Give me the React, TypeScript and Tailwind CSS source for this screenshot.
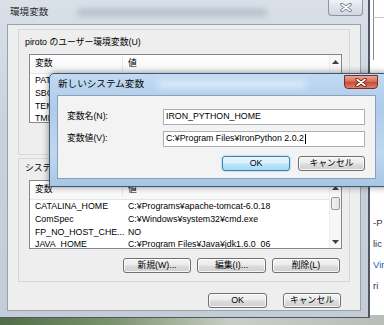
import React from "react";

// values of the user list sit under the dialog, so only names are drawn
const userVars = [
  ["PATH", ""],
  ["SBCL_HOME", ""],
  ["TEMP", ""],
  ["TMP", ""]
];

const systemVars = [
  ["CATALINA_HOME", "C:¥Programs¥apache-tomcat-6.0.18"],
  ["ComSpec", "C:¥Windows¥system32¥cmd.exe"],
  ["FP_NO_HOST_CHE...", "NO"],
  ["JAVA_HOME", "C:¥Program Files¥Java¥jdk1.6.0_06"]
];

const btn =
  "flex items-center justify-center rounded-[3px] border border-[#707070] bg-[linear-gradient(#f4f4f4_0%,#ebebeb_48%,#dddddd_52%,#cfcfcf_100%)] shadow-[inset_0_0_0_1px_rgba(255,255,255,0.8)] text-black";

function CloseGlyph({ light }: { light?: boolean }) {
  return (
    <svg width="12" height="9" viewBox="0 0 12 9">
      <path d="M2 1.5 L10 7.5 M10 1.5 L2 7.5" stroke={light ? "#6b7480" : "#5a1a10"} strokeWidth="3.4" strokeLinecap="round" />
      <path d="M2 1.5 L10 7.5 M10 1.5 L2 7.5" stroke="#ffffff" strokeWidth="1.6" strokeLinecap="round" />
    </svg>
  );
}

function Arrow({ down }: { down?: boolean }) {
  return (
    <svg width="7" height="4" viewBox="0 0 7 4">
      <path d={down ? "M0 0 L7 0 L3.5 4 Z" : "M0 4 L7 4 L3.5 0 Z"} fill="#404040" />
    </svg>
  );
}

function ListBox({ rows, thumb }: { rows: string[][]; thumb?: boolean }) {
  return (
    <div className="relative ml-[10px] h-[69px] w-[313px] overflow-hidden border border-[#828790] bg-white">
      <div className="flex h-[19px] items-center border-b border-[#e5e5e5] bg-[linear-gradient(#ffffff,#f6f7f8)]">
        <div className="w-[93px] border-r border-[#e3e6ea] pl-[5px]">変数</div>
        <div className="pl-[5px]">値</div>
      </div>
      {rows.map(([name, value]) => (
        <div className="flex h-[12.7px] items-center leading-[12px]" key={name}>
          <div className="w-[93px] shrink-0 whitespace-nowrap pl-[5px]">{name}</div>
          <div className="whitespace-nowrap pl-[5px]">{value}</div>
        </div>
      ))}
      <div className="absolute right-0 top-0 flex h-full w-[12px] flex-col items-center border-l border-[#ededed] bg-[#f7f7f7]">
        <div className="flex h-[13px] w-full items-center justify-center">
          <Arrow />
        </div>
        <div className="w-full flex-1 px-[1px] pt-[3px]">
          {thumb && (
            <div className="h-[13px] w-full rounded-[2px] border border-[#9a9a9a] bg-[linear-gradient(90deg,#f3f3f3,#e2e2e2)]" />
          )}
        </div>
        <div className="flex h-[13px] w-full items-center justify-center">
          <Arrow down />
        </div>
      </div>
    </div>
  );
}

export default function App() {
  return (
    <div className="relative h-[325px] w-[384px] overflow-hidden bg-white font-['Liberation_Sans','Noto_Sans_CJK_JP',sans-serif] text-[8.8px] text-black">
      {/* desktop bits behind the windows */}
      <div className="absolute bottom-0 left-0 h-[10px] w-full bg-[linear-gradient(90deg,#4f6d48,#7d9470_30%,#c9cec6_60%,#b9bdb8)]" />
      <div className="absolute left-[373px] top-0 h-[60px] w-px bg-[#8a8a8a]" />
      <div className="absolute left-[373px] top-[17px] h-px w-[11px] bg-[#c8c8c8]" />
      <div className="absolute left-[373px] top-[217px] flex flex-col gap-[9px] text-[9.5px] leading-[12px] text-[#333]">
        <span>-P</span>
        <span>lic</span>
        <span className="text-[#1d5fb0]">Vir</span>
        <span>ri</span>
      </div>

      {/* 環境変数 main window (inactive) */}
      <div className="absolute left-0 top-0 flex h-[318px] w-[370px] flex-col border-b border-r-2 border-[#4e5863] bg-[linear-gradient(#d9e0e8,#c9d2dc_40%,#c4ccd6)] pb-[6px] pl-[7px] pr-[7px]">
        <div className="relative flex h-[24px] items-center pl-[3px] text-[9.6px] text-[#2a2a2a]">
          環境変数
          <div className="absolute left-[70px] top-[9px] h-[7px] w-[190px] rounded bg-[#b3bcc7] blur-[3px]" />
          <div className="absolute left-[321px] top-0 flex h-[16px] w-[35px] items-center justify-center rounded-b-[4px] border border-t-0 border-[#8c96a2] bg-[linear-gradient(#eef2f6,#dde3ea_50%,#d0d8e1)]">
            <CloseGlyph light />
          </div>
        </div>
        <div className="flex flex-1 flex-col border border-[#98a2ad] bg-[#eeeeee] pt-[4px]">
          <div className="ml-[10px] flex h-[126px] w-[332px] flex-col border border-[#d6d9dc] pt-[6px]">
            <div className="pl-[6px] leading-[12px]">piroto のユーザー環境変数(U)</div>
            <div className="mt-[6px]">
              <ListBox rows={userVars} />
            </div>
          </div>
          <div className="ml-[10px] mt-[3px] flex h-[124px] w-[332px] flex-col border border-[#d6d9dc] pt-[3px]">
            <div className="pl-[6px] leading-[12px]">システム環境変数(S)</div>
            <div className="mt-[6px]">
              <ListBox rows={systemVars} thumb />
            </div>
            <div className="mr-[9px] mt-[9px] flex justify-end gap-[6px]">
              <div className={`${btn} h-[15px] w-[68px]`}>新規(W)...</div>
              <div className={`${btn} h-[15px] w-[69px]`}>編集(I)...</div>
              <div className={`${btn} h-[15px] w-[68px]`}>削除(L)</div>
            </div>
          </div>
          <div className="mr-[19px] mt-[11px] flex justify-end gap-[16px]">
            <div className={`${btn} h-[15px] w-[59px]`}>OK</div>
            <div className={`${btn} h-[15px] w-[58px]`}>キャンセル</div>
          </div>
        </div>
      </div>

      {/* 新しいシステム変数 dialog (active) */}
      <div className="absolute left-[49px] top-[73px] flex h-[114px] w-[340px] flex-col rounded-t-[5px] border border-[#3b5a7a] bg-[linear-gradient(#c2daf2,#aecbea_30%,#bfd8f0_70%,#a8c6e4)] pb-[7px] pl-[7px] pr-[12px] shadow-[0_0_7px_rgba(0,0,0,0.45)]">
        <div className="relative flex h-[21px] items-center pl-[1px] text-[9.6px] text-black">
          新しいシステム変数
          <div className="absolute left-[100px] top-[6px] h-[8px] w-[150px] rounded bg-[#dbeaf7] blur-[3px]" />
          <div className="absolute right-[-2px] top-[1px] flex h-[14px] w-[34px] items-center justify-center rounded-b-[4px] border border-[#7a2e22] bg-[linear-gradient(#eaa995,#d66f57_45%,#c54a33_52%,#d9826a)]">
            <CloseGlyph />
          </div>
        </div>
        <div className="flex flex-1 flex-col border border-[#8aa0b8] bg-[#f3f3f3] pl-[9px] pr-[10px] pt-[13px]">
          <div className="flex h-[16px] items-center">
            <span className="w-[96px]">変数名(N):</span>
            <div className="flex h-[16px] flex-1 items-center border border-[#abadb3] bg-white pl-[2px]">IRON_PYTHON_HOME</div>
          </div>
          <div className="mt-[6px] flex h-[16px] items-center">
            <span className="w-[96px]">変数値(V):</span>
            <div className="flex h-[16px] flex-1 items-center border border-[#abadb3] bg-white pl-[2px]">
              C:¥Program Files¥IronPython 2.0.2
              <span className="ml-[1px] h-[10px] w-px bg-black" />
            </div>
          </div>
          <div className="mt-[9px] flex justify-end gap-[8px]">
            <div className="flex h-[15px] w-[68px] items-center justify-center rounded-[3px] border border-[#3c7fb1] bg-[linear-gradient(#eaf6fd,#d9f0fc_48%,#bee6fd_52%,#a7d9f5)] shadow-[0_0_2px_#60b8ee]">
              OK
            </div>
            <div className={`${btn} h-[15px] w-[67px]`}>キャンセル</div>
          </div>
        </div>
      </div>
    </div>
  );
}
